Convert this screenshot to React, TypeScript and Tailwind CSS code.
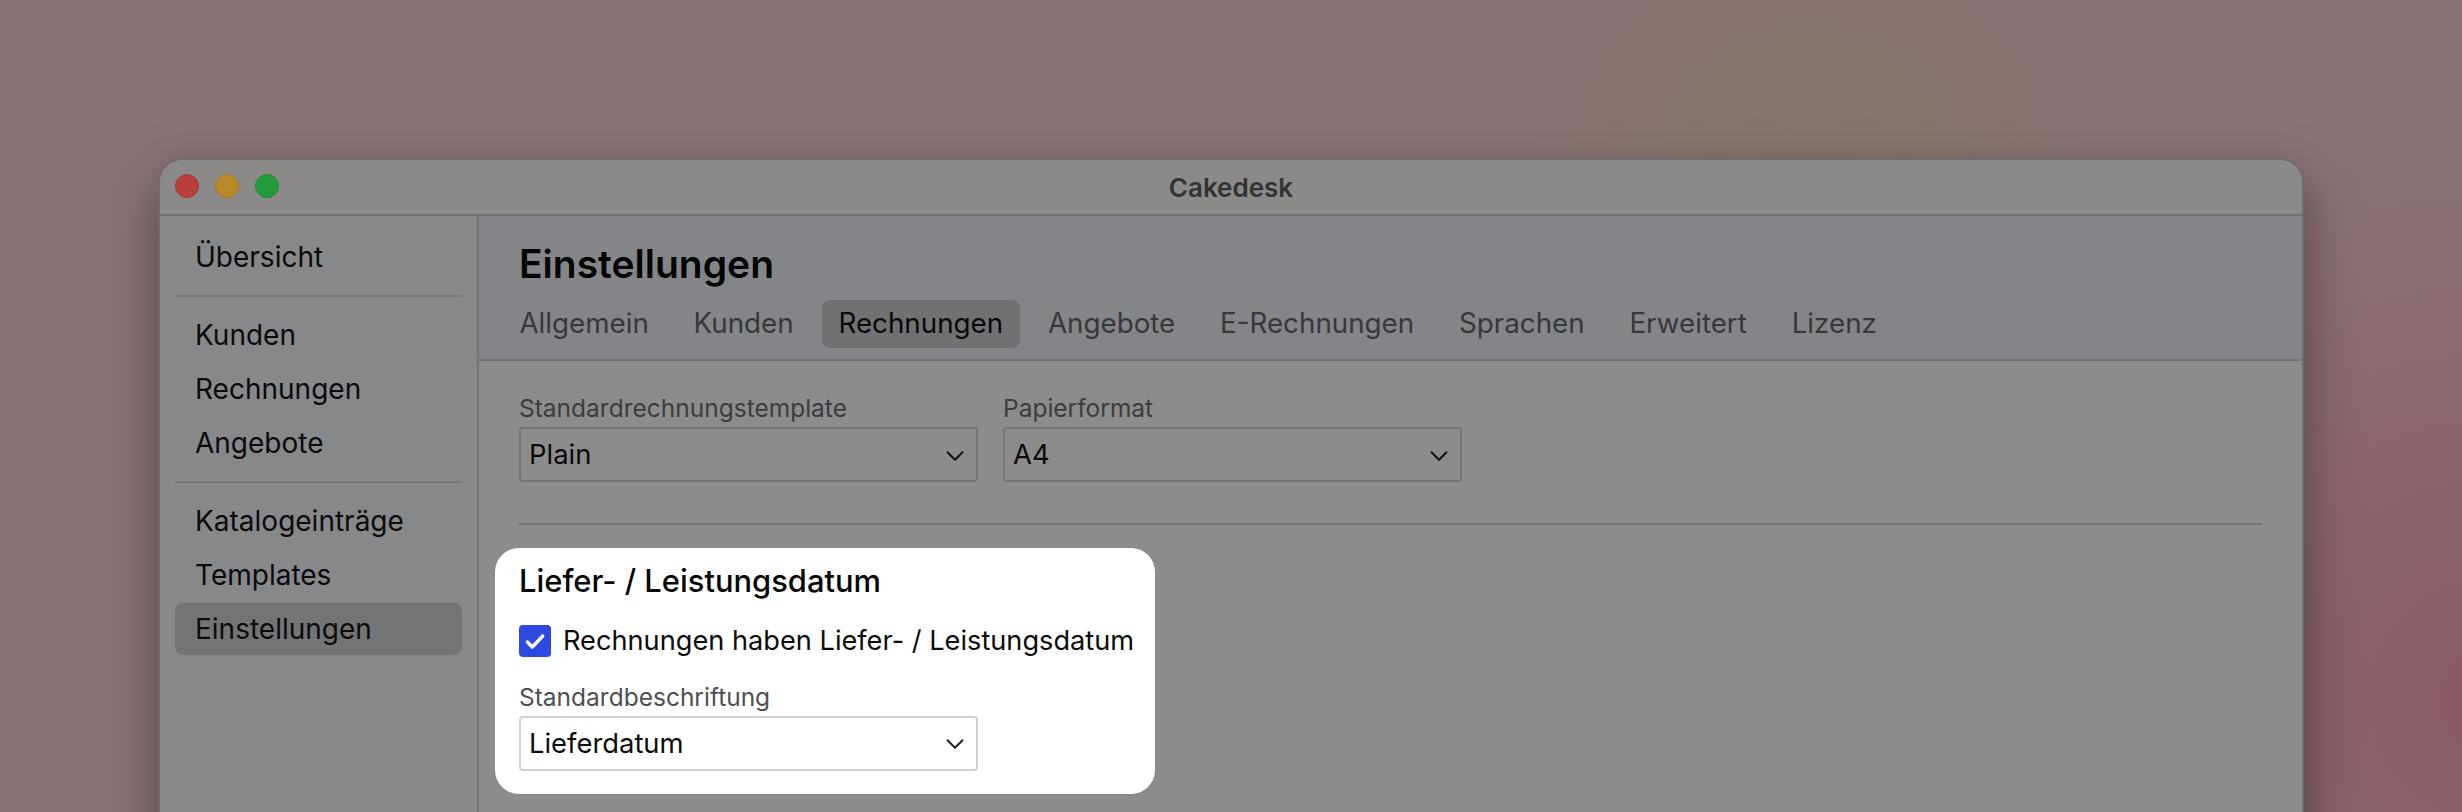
import { ChevronDown } from "lucide-react";

const font = { fontFamily: "Inter, 'Noto Sans', sans-serif" };

const tabs = ["Allgemein", "Kunden", "Rechnungen", "Angebote", "E-Rechnungen", "Sprachen", "Erweitert", "Lizenz"];

function NavItem({ label, active }: { label: string; active?: boolean }) {
  return (
    <div className={`h-[52px] mb-[2px] flex items-center px-[20px] rounded-[8px] text-[28px] text-[#0b0b0c] ${active ? "bg-[#737476]" : ""}`}>
      {label}
    </div>
  );
}

function Divider() {
  return <div className="h-[2px] bg-[#77787a] my-[12px]" />;
}

function Select({ label, value, light }: { label: string; value: string; light?: boolean }) {
  return (
    <div className="w-[459px]">
      <div className={`text-[24.5px] leading-[28px] mb-[5px] ${light ? "text-[#4f4f52]" : "text-[#3c3c3e]"}`}>{label}</div>
      <div className={`h-[55px] border-2 rounded-[4px] flex items-center justify-between pl-[8px] pr-[6px] text-[27.4px] ${light ? "bg-white border-[#cfd1d4] text-[#0c0c0c]" : "bg-[#8c8c8c] border-[#747576] text-[#0a0a0a]"}`}>
        <span>{value}</span>
        <ChevronDown size={30} strokeWidth={1.6} className={`mt-[2px] ${light ? "text-[#222]" : "text-[#111]"}`} />
      </div>
    </div>
  );
}

export default function App() {
  return (
    <div
      style={font}
      className="h-[812px] overflow-hidden pt-[158px] bg-[#8b7276] bg-[radial-gradient(ellipse_300px_240px_at_1810px_140px,#86766b_0%,transparent_100%),radial-gradient(ellipse_600px_560px_at_2500px_700px,#8a5963_0%,transparent_100%)]"
    >
      <div className="w-[2146px] h-[700px] mx-auto rounded-t-[24px] overflow-hidden border-t-2 border-x-2 border-[#6f6a6c] shadow-[0_20px_50px_rgba(45,45,35,0.6)] flex flex-col">
        <div className="h-[56px] shrink-0 relative flex items-center justify-center bg-[#8b8a88] border-b-2 border-[#737272]">
          <div className="absolute left-[15px] top-[14px] flex gap-[16px]">
            <div className="w-[24px] h-[24px] rounded-full bg-[#b93f3b] border border-[#a33a38]" />
            <div className="w-[24px] h-[24px] rounded-full bg-[#b98a27] border border-[#a67a24]" />
            <div className="w-[24px] h-[24px] rounded-full bg-[#229c3a] border border-[#1f8c36]" />
          </div>
          <span className="text-[26px] font-semibold text-[#333335]">Cakedesk</span>
        </div>
        <div className="flex flex-1 min-h-0">
          <div className="w-[319px] shrink-0 bg-[#87888a] border-r-2 border-[#737476] px-[15px] pt-[15px]">
            <NavItem label="Übersicht" />
            <Divider />
            <NavItem label="Kunden" />
            <NavItem label="Rechnungen" />
            <NavItem label="Angebote" />
            <Divider />
            <NavItem label="Katalogeinträge" />
            <NavItem label="Templates" />
            <NavItem label="Einstellungen" active />
          </div>
          <div className="flex-1 bg-[#8c8c8c]">
            <div className="h-[145px] bg-[#838588] border-b-2 border-[#737476] px-[40px] pt-[25px]">
              <div className="text-[39px] leading-[46px] font-semibold text-[#050505]">Einstellungen</div>
              <div className="flex gap-[12px] mt-[13px] -ml-[16px]">
                {tabs.map((t) => (
                  <div
                    key={t}
                    className={`h-[48px] px-[16.4px] flex items-center rounded-[8px] text-[27.75px] ${t === "Rechnungen" ? "bg-[#707173] text-[#080808]" : "text-[#37383a]"}`}
                  >
                    {t}
                  </div>
                ))}
              </div>
            </div>
            <div className="px-[40px] pt-[33px]">
              <div className="flex gap-[25px]">
                <Select label="Standardrechnungstemplate" value="Plain" />
                <Select label="Papierformat" value="A4" />
              </div>
              <div className="h-[2px] bg-[#747576] mt-[41px]" />
              <div className="-ml-[24px] mt-[23px] w-[660px] h-[246px] bg-white rounded-[24px] pl-[24px] pt-[13px]">
                <div className="text-[30.9px] leading-[40px] text-[#050505] font-medium">Liefer- / Leistungsdatum</div>
                <div className="flex items-center gap-[12px] mt-[20px]">
                  <div className="w-[32px] h-[32px] rounded-[4px] bg-[#2d49e0] flex items-center justify-center">
                    <svg width="24" height="24" viewBox="0 0 22 22" fill="none" stroke="#fff" strokeWidth="3.2" strokeLinecap="round" strokeLinejoin="round">
                      <path d="M4 12l4.5 4.5L18 6.5" />
                    </svg>
                  </div>
                  <span className="text-[27.2px] text-[#0c0c0c]">Rechnungen haben Liefer- / Leistungsdatum</span>
                </div>
                <div className="mt-[21px]">
                  <Select label="Standardbeschriftung" value="Lieferdatum" light />
                </div>
              </div>
            </div>
          </div>
        </div>
      </div>
    </div>
  );
}
